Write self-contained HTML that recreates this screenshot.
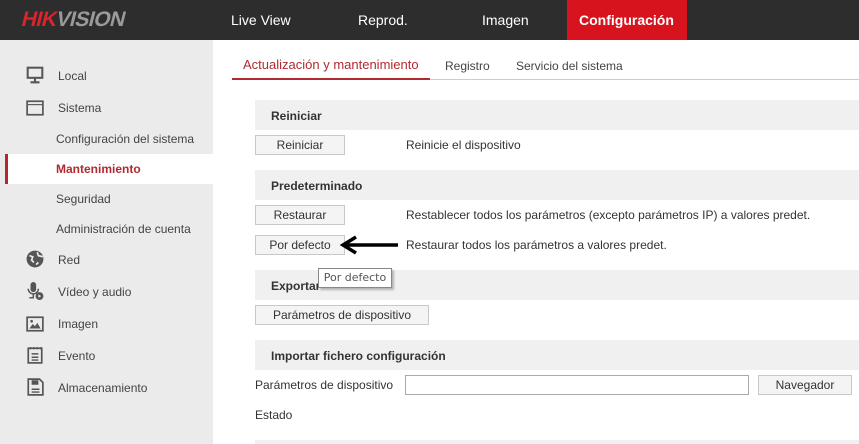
<!DOCTYPE html><html><head><style>
body{margin:0;width:859px;height:444px;overflow:hidden;font-family:"Liberation Sans",sans-serif;font-size:12px;color:#333;background:#fff;position:relative}
.a{position:absolute}
.hdr{left:0;top:0;width:859px;height:40px;background:#2d2d2d}
.nav{color:#fff;font-size:14px;top:12px}
.side{left:0;top:40px;width:213px;height:404px;background:#ebebeb}
.si{left:58px;font-size:12px;color:#444}
.bar{left:255px;width:604px;height:30px;background:#f0f0f0}
.bar b{position:absolute;left:16px;top:9px;font-size:12px;color:#333}
.btn{height:18px;border:1px solid #c8c8c8;background:#f4f4f4;text-align:center;line-height:18px;box-sizing:content-box}
.ico{left:26px;width:18px;height:18px}
</style></head><body>
<div class="a hdr"></div>
<div class="a" style="left:22px;top:8px;font-size:21px;font-weight:bold;letter-spacing:-0.5px;transform:skewX(-14deg)"><span style="color:#d8242b">HIK</span><span style="color:#9a9a9a">VISION</span></div>
<div class="a nav" style="left:231px">Live View</div>
<div class="a nav" style="left:358px">Reprod.</div>
<div class="a nav" style="left:482px">Imagen</div>
<div class="a" style="left:567px;top:0;width:120px;height:40px;background:#d7141e"></div>
<div class="a nav" style="left:579px;font-weight:bold">Configuración</div>
<div class="a side"></div>
<svg class="a ico" style="top:66px" viewBox="0 0 16 16"><rect x="1.5" y="1.5" width="13" height="9" fill="none" stroke="#555" stroke-width="1.8"/><path d="M8 11v3M4 14.5h8" stroke="#555" stroke-width="1.8"/></svg>
<div class="a si" style="top:69px">Local</div>
<svg class="a ico" style="top:99px" viewBox="0 0 16 16"><rect x="1" y="2" width="14" height="12" fill="none" stroke="#555" stroke-width="1.5"/><path d="M1 5h14" stroke="#555"/></svg>
<div class="a si" style="top:101px">Sistema</div>
<div class="a si" style="left:56px;top:132px">Configuración del sistema</div>
<div class="a" style="left:5px;top:154px;width:208px;height:30px;background:#fff"></div>
<div class="a" style="left:5px;top:154px;width:3px;height:30px;background:#b02a30"></div>
<div class="a si" style="left:56px;top:162px;color:#b02a30;font-weight:bold">Mantenimiento</div>
<div class="a si" style="left:56px;top:192px">Seguridad</div>
<div class="a si" style="left:56px;top:222px">Administración de cuenta</div>
<svg class="a ico" style="top:250px" viewBox="0 0 16 16"><circle cx="8" cy="8" r="7.5" fill="#555"/><path d="M3 5l3 1-1 3 2 2M10 2l1 3 4 1M9 13l2-2" stroke="#ebebeb" stroke-width="1.5" fill="none"/></svg>
<div class="a si" style="top:253px">Red</div>
<svg class="a ico" style="top:282px" viewBox="0 0 16 16"><rect x="4" y="0" width="5" height="9" rx="2.5" fill="#555"/><path d="M2 6a4.5 4.5 0 0 0 9 0M6.5 11v3H3" stroke="#555" stroke-width="1.3" fill="none"/><circle cx="12" cy="12.5" r="3.5" fill="#555"/><path d="M11 11v3l2.5-1.5z" fill="#ebebeb"/></svg>
<div class="a si" style="top:285px">Vídeo y audio</div>
<svg class="a ico" style="top:315px" viewBox="0 0 16 16"><rect x="1" y="2" width="14" height="12" fill="none" stroke="#555" stroke-width="1.5"/><path d="M3 12l3-4 2 2 2-3 3 5z" fill="#555"/><circle cx="5" cy="5.5" r="1.2" fill="#555"/></svg>
<div class="a si" style="top:317px">Imagen</div>
<svg class="a ico" style="top:346px" viewBox="0 0 16 16"><rect x="2" y="2" width="12" height="13" fill="none" stroke="#555" stroke-width="1.5"/><path d="M4 1v2M7 1v2M10 1v2M13 1v2M5 7h6M5 10h6M5 12.5h6" stroke="#555" stroke-width="1.3"/></svg>
<div class="a si" style="top:349px">Evento</div>
<svg class="a ico" style="top:378px" viewBox="0 0 16 16"><path d="M2 1h10l3 3v11H2z" fill="none" stroke="#555" stroke-width="1.5"/><rect x="5" y="2" width="6" height="4" fill="#555"/><path d="M5 10h7M5 12.5h7" stroke="#555" stroke-width="1.3"/></svg>
<div class="a si" style="top:381px">Almacenamiento</div>

<div class="a" style="left:232px;top:79px;width:627px;height:1px;background:#ccc"></div>
<div class="a" style="left:232px;top:78px;width:198px;height:2px;background:#b02a30"></div>
<div class="a" style="left:243px;top:57px;color:#b02a30;font-size:13px">Actualización y mantenimiento</div>
<div class="a" style="left:445px;top:59px;color:#444">Registro</div>
<div class="a" style="left:516px;top:59px;color:#444">Servicio del sistema</div>

<div class="a bar" style="top:100px"><b>Reiniciar</b></div>
<div class="a btn" style="left:255px;top:135px;width:88px">Reiniciar</div>
<div class="a" style="left:406px;top:138px">Reinicie el dispositivo</div>
<div class="a bar" style="top:170px"><b>Predeterminado</b></div>
<div class="a btn" style="left:255px;top:205px;width:88px">Restaurar</div>
<div class="a" style="left:406px;top:208px">Restablecer todos los parámetros (excepto parámetros IP) a valores predet.</div>
<div class="a btn" style="left:255px;top:235px;width:88px">Por defecto</div>
<div class="a" style="left:406px;top:238px">Restaurar todos los parámetros a valores predet.</div>
<svg class="a" style="left:338px;top:234px" width="64" height="22" viewBox="0 0 64 22"><path d="M6 11H60" stroke="#000" stroke-width="3.5"/><path d="M18 3L5 11l13 8" stroke="#000" stroke-width="3.5" fill="none"/></svg>
<div class="a bar" style="top:270px"><b>Exportar</b></div>
<div class="a" style="left:318px;top:268px;width:72px;height:18px;background:#fff;border:1px solid #888;box-shadow:2px 2px 2px rgba(0,0,0,.25);font-family:'DejaVu Sans',sans-serif;font-size:11px;color:#555;line-height:18px;text-align:center">Por defecto</div>
<div class="a btn" style="left:255px;top:305px;width:172px">Parámetros de dispositivo</div>
<div class="a bar" style="top:340px"><b>Importar fichero configuración</b></div>
<div class="a" style="left:255px;top:378px">Parámetros de dispositivo</div>
<div class="a" style="left:405px;top:375px;width:342px;height:18px;border:1px solid #aaa"></div>
<div class="a btn" style="left:758px;top:375px;width:92px">Navegador</div>
<div class="a" style="left:255px;top:408px">Estado</div>
<div class="a" style="left:255px;top:440px;width:604px;height:4px;background:#f0f0f0"></div>
</body></html>
